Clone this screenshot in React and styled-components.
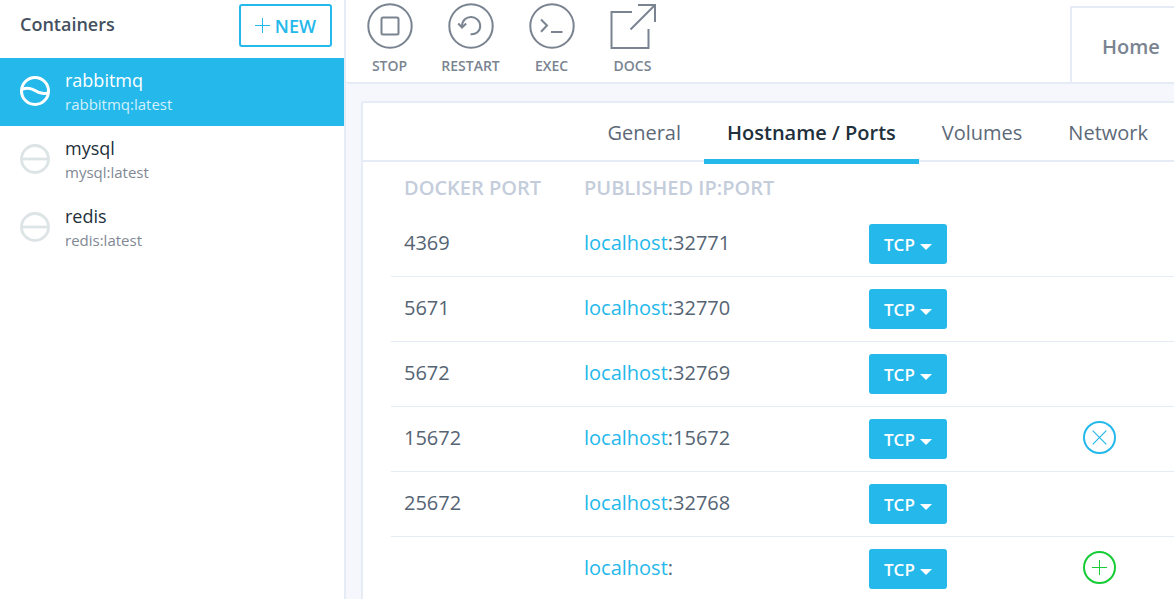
import React from "react";
import styled, { createGlobalStyle } from "styled-components";

const blue = "#24b8eb";
const line = "#e5ecf5";

const GlobalStyle = createGlobalStyle`
  * { box-sizing: border-box; }
  body {
    margin: 0;
    background: #f5f7fc;
    font-family: "Open Sans", "Noto Sans", sans-serif;
    color: #556473;
  }
  button, select { font-family: inherit; cursor: pointer; }
`;

const Shell = styled.div`
  display: flex;
  min-height: 100vh;
`;

const Sidebar = styled.aside`
  flex: 0 0 346px;
  background: #fff;
  border-right: 2px solid ${line};
`;

const SidebarHeader = styled.header`
  display: flex;
  align-items: flex-start;
  justify-content: space-between;
  height: 58px;
  padding: 4px 12px 0 20px;
`;

const SidebarTitle = styled.h1`
  margin: 0;
  font-size: 18px;
  line-height: 40px;
  font-weight: 600;
  color: #445160;
`;

const NewButton = styled.button`
  display: flex;
  align-items: center;
  gap: 5px;
  height: 43px;
  padding: 0 14px;
  border: 2px solid ${blue};
  border-radius: 3px;
  background: #fff;
  color: ${blue};
  font-size: 18px;
  font-weight: 600;
`;

const ContainerList = styled.ul`
  margin: 0;
  padding: 0;
  list-style: none;
`;

const ContainerItem = styled.li`
  display: flex;
  align-items: center;
  gap: 15px;
  height: 68px;
  padding: 0 20px;
  background: ${(p) => (p.$active ? blue : "#fff")};
  color: ${(p) => (p.$active ? "#fff" : "#22303c")};
`;

const StatusGlyph = styled.svg`
  margin-bottom: 2px;
`;

const ContainerName = styled.div`
  font-size: 18px;
  line-height: 24px;
`;

const ContainerImage = styled.div`
  font-size: 15px;
  line-height: 24px;
  color: ${(p) => (p.$active ? "#d3f0fb" : "#7f8894")};
`;

const Main = styled.main`
  flex: 1;
  min-width: 0;
  display: flex;
  flex-direction: column;
`;

const Toolbar = styled.header`
  display: flex;
  align-items: flex-end;
  justify-content: space-between;
  height: 84px;
  background: #fff;
  border-bottom: 2px solid ${line};
  border-bottom-left-radius: 3px;
`;

const Actions = styled.div`
  display: flex;
  align-self: flex-start;
  padding: 3px 0 0 3px;
`;

const Action = styled.button`
  display: flex;
  flex-direction: column;
  align-items: center;
  gap: 7px;
  width: 81px;
  padding: 0;
  border: 0;
  background: none;
  color: #7a8491;
  font-size: 14px;
  line-height: 20px;
  font-weight: 600;
`;

const HomeTab = styled.a`
  width: 104px;
  height: 76px;
  padding-left: 30px;
  border: solid ${line};
  border-width: 2px 0 0 2px;
  color: #7a8491;
  font-size: 20px;
  line-height: 78px;
  font-weight: 600;
  text-decoration: none;
`;

const Card = styled.section`
  flex: 1;
  margin: 17px 0 0 15px;
  background: #fff;
  border: solid ${line};
  border-width: 2px 0 0 2px;
  border-top-left-radius: 3px;
`;

const Tabs = styled.nav`
  display: flex;
  justify-content: flex-end;
  height: 59px;
  padding-right: 3px;
  border-bottom: 2px solid ${line};
`;

const Tab = styled.a`
  flex: none;
  height: 61px;
  padding: 0 23px;
  font-size: 20px;
  line-height: 60px;
  text-decoration: none;
  font-weight: ${(p) => (p.$active ? 600 : 400)};
  color: ${(p) => (p.$active ? "#22303c" : "#5d6978")};
  box-shadow: ${(p) => (p.$active ? `inset 0 -5px ${blue}` : "none")};
`;

const TableArea = styled.div`
  padding-left: 28px;
`;

const PortTable = styled.table`
  width: 100%;
  table-layout: fixed;
  border-collapse: separate;
  border-spacing: 0;
  font-size: 20px;
`;

const Column = styled.col`
  width: ${(p) => p.$width};
`;

const HeadCell = styled.th`
  height: 50px;
  padding: 0 13px;
  text-align: left;
  font-size: 20px;
  font-weight: 600;
  color: #c4cddb;
  white-space: nowrap;
`;

const Cell = styled.td`
  height: 65px;
  padding: 0 13px 3px;
  line-height: 30px;
  vertical-align: middle;
`;

const ControlCell = styled(Cell)`
  padding-bottom: 0;
`;

const Row = styled.tr`
  &:not(:last-child) td { border-bottom: 1px solid ${line}; }
  &:last-child td { height: 64px; }
`;

const HostLink = styled.a`
  color: ${blue};
  text-decoration: none;
`;

const SelectBox = styled.label`
  position: relative;
  display: block;
  width: 78px;
  height: 40px;
`;

const ProtocolSelect = styled.select`
  appearance: none;
  width: 100%;
  height: 100%;
  padding: 0 0 0 15px;
  border: 0;
  border-radius: 3px;
  background: ${blue};
  color: #fff;
  font-size: 17px;
  font-weight: 600;
`;

const Caret = styled.svg`
  position: absolute;
  right: 15px;
  top: 20px;
  pointer-events: none;
`;

const RoundButton = styled.button`
  display: grid;
  place-items: center;
  width: 33px;
  height: 33px;
  padding: 0;
  border: 2px solid ${(p) => p.$color};
  border-radius: 50%;
  background: #fff;
  color: ${(p) => p.$color};
`;

const svgProps = { fill: "none", stroke: "currentColor", "aria-hidden": true };

const PlusIcon = () => (
  <svg width="15" height="15" viewBox="0 0 15 15" {...svgProps}>
    <path d="M7.5 0V15M0 7.5H15" />
  </svg>
);

const CrossIcon = () => (
  <svg width="15" height="15" viewBox="0 0 15 15" {...svgProps} strokeWidth="1.2">
    <path d="M.7.7L14.3 14.3M14.3.7L.7 14.3" />
  </svg>
);

const StateIcon = ({ running }) => (
  <StatusGlyph width="30" height="30" viewBox="0 0 30 30" fill="none" aria-hidden="true"
    stroke={running ? "#fff" : "#dde4e5"} strokeWidth={running ? 3 : 2.8}>
    <circle cx="15" cy="15" r="13.5" />
    {running
      ? <path d="M2 13.3C7 11.3 11 11.8 15 14.5C19 17.3 23 18.5 28 16.8" />
      : <path d="M2 15H28" />}
  </StatusGlyph>
);

const icons = {
  STOP: (
    <>
      <circle cx="23" cy="23" r="21.7" />
      <rect x="14.5" y="14.5" width="17" height="17" rx="1.5" />
    </>
  ),
  RESTART: (
    <>
      <circle cx="23" cy="23" r="21.7" />
      <path d="M14 23.5C14 10.5 32.2 11.5 32.2 23C32.2 28.2 28 31.8 22.5 31.3" />
      <path d="M10.2 20.5L14 24.5L18.2 20.5" />
    </>
  ),
  EXEC: (
    <>
      <circle cx="23" cy="23" r="21.7" />
      <path d="M12 16.5L18 22.5L12 28.8M22 29H33.5" />
    </>
  ),
  DOCS: <path d="M22 9H1.5V45H38.5V26M28 2H45V19M45 2L20.5 26.5" />,
};

const containers = [
  { name: "rabbitmq", running: true },
  { name: "mysql" },
  { name: "redis" },
];

const tabs = ["General", "Hostname / Ports", "Volumes", "Network"];

const ports = [
  { docker: "4369", host: "32771" },
  { docker: "5671", host: "32770" },
  { docker: "5672", host: "32769" },
  { docker: "15672", host: "15672", action: "remove" },
  { docker: "25672", host: "32768" },
  { docker: "", host: "", action: "add" },
];

export default function App() {
  return (
    <Shell>
      <GlobalStyle />
      <Sidebar>
        <SidebarHeader>
          <SidebarTitle>Containers</SidebarTitle>
          <NewButton type="button"><PlusIcon /> NEW</NewButton>
        </SidebarHeader>
        <ContainerList>
          {containers.map(({ name, running }) => (
            <ContainerItem key={name} $active={running}>
              <StateIcon running={running} />
              <div>
                <ContainerName>{name}</ContainerName>
                <ContainerImage $active={running}>{`${name}:latest`}</ContainerImage>
              </div>
            </ContainerItem>
          ))}
        </ContainerList>
      </Sidebar>
      <Main>
        <Toolbar>
          <Actions>
            {Object.entries(icons).map(([label, drawing]) => (
              <Action key={label} type="button">
                <svg width="46" height="46" viewBox="0 0 46 46" {...svgProps} strokeWidth="2">{drawing}</svg>
                {label}
              </Action>
            ))}
          </Actions>
          <HomeTab href="#home">Home</HomeTab>
        </Toolbar>
        <Card>
          <Tabs>
            {tabs.map((name, i) => (
              <Tab key={name} href={`#tab-${i}`} $active={i === 1}>{name}</Tab>
            ))}
          </Tabs>
          <TableArea>
            <PortTable>
              <colgroup>
                <Column $width="180px" />
                <Column $width="285px" />
                <Column $width="214px" />
                <Column $width="auto" />
              </colgroup>
              <thead>
                <tr>
                  <HeadCell scope="col">DOCKER PORT</HeadCell>
                  <HeadCell scope="col">PUBLISHED IP:PORT</HeadCell>
                  <HeadCell />
                  <HeadCell />
                </tr>
              </thead>
              <tbody>
                {ports.map(({ docker, host, action }) => (
                  <Row key={docker}>
                    <Cell>{docker}</Cell>
                    <Cell><HostLink href="#host">localhost</HostLink>{`:${host}`}</Cell>
                    <ControlCell>
                      <SelectBox>
                        <ProtocolSelect aria-label={`Protocol ${docker}`} defaultValue="TCP">
                          <option>TCP</option>
                          <option>UDP</option>
                        </ProtocolSelect>
                        <Caret width="12" height="6" viewBox="0 0 12 6" aria-hidden="true">
                          <path d="M0 0H12L6 6Z" fill="#fff" />
                        </Caret>
                      </SelectBox>
                    </ControlCell>
                    <Cell>
                      {action && (
                        <RoundButton type="button" aria-label={action} $color={action === "add" ? "#15cc35" : blue}>
                          {action === "add" ? <PlusIcon /> : <CrossIcon />}
                        </RoundButton>
                      )}
                    </Cell>
                  </Row>
                ))}
              </tbody>
            </PortTable>
          </TableArea>
        </Card>
      </Main>
    </Shell>
  );
}
